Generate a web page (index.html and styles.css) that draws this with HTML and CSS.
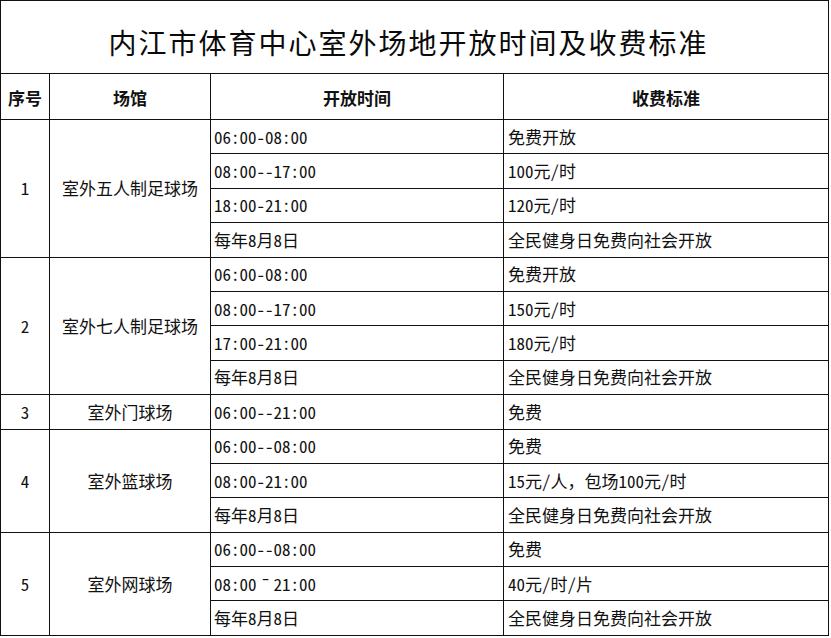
FILE: index.html
```html
<!DOCTYPE html>
<html lang="zh-CN">
<head>
<meta charset="utf-8">
<title>内江市体育中心室外场地开放时间及收费标准</title>
<link rel="stylesheet" href="styles.css">
</head>
<body>
<table class="sheet">
  <colgroup>
    <col class="c-no">
    <col class="c-venue">
    <col class="c-time">
    <col class="c-fee">
  </colgroup>
  <tr class="title-row"><td colspan="4" class="title">内江市体育中心室外场地开放时间及收费标准</td></tr>
  <tr class="head"><th>序号</th><th>场馆</th><th>开放时间</th><th>收费标准</th></tr>

  <tr><td rowspan="4" class="no">1</td><td rowspan="4" class="venue">室外五人制足球场</td><td class="time">06:00-08:00</td><td class="fee">免费开放</td></tr>
  <tr><td class="time">08:00--17:00</td><td class="fee">100元/时</td></tr>
  <tr><td class="time">18:00-21:00</td><td class="fee">120元/时</td></tr>
  <tr><td class="time">每年8月8日</td><td class="fee">全民健身日免费向社会开放</td></tr>

  <tr><td rowspan="4" class="no">2</td><td rowspan="4" class="venue">室外七人制足球场</td><td class="time">06:00-08:00</td><td class="fee">免费开放</td></tr>
  <tr><td class="time">08:00--17:00</td><td class="fee">150元/时</td></tr>
  <tr><td class="time">17:00-21:00</td><td class="fee">180元/时</td></tr>
  <tr><td class="time">每年8月8日</td><td class="fee">全民健身日免费向社会开放</td></tr>

  <tr><td class="no">3</td><td class="venue">室外门球场</td><td class="time">06:00--21:00</td><td class="fee">免费</td></tr>

  <tr><td rowspan="3" class="no">4</td><td rowspan="3" class="venue">室外篮球场</td><td class="time">06:00--08:00</td><td class="fee">免费</td></tr>
  <tr><td class="time">08:00-21:00</td><td class="fee">15元/人<span class="fw">，</span>包场100元/时</td></tr>
  <tr><td class="time">每年8月8日</td><td class="fee">全民健身日免费向社会开放</td></tr>

  <tr><td rowspan="3" class="no">5</td><td rowspan="3" class="venue">室外网球场</td><td class="time">06:00--08:00</td><td class="fee">免费</td></tr>
  <tr><td class="time">08:00<span class="fw dash">－</span>21:00</td><td class="fee">40元/时/片</td></tr>
  <tr><td class="time">每年8月8日</td><td class="fee">全民健身日免费向社会开放</td></tr>
</table>
</body>
</html>
```

FILE: styles.css
```css
html, body {
  margin: 0;
  padding: 0;
  background: #fff;
}

body {
  font-family: "Noto Sans CJK SC", "Noto Sans", sans-serif;
  color: #111;
}

.sheet {
  border-collapse: collapse;
  table-layout: fixed;
  width: 828px;
}

.c-no { width: 49px; }
.c-venue { width: 161px; }
.c-time { width: 293px; }
.c-fee { width: 325px; }

.sheet td,
.sheet th {
  border: 1px solid #111;
  padding: 0;
  font-size: 17px;
  line-height: 20px;
  font-weight: 400;
  font-feature-settings: "hwid" 1;
  white-space: nowrap;
  overflow: hidden;
}

.fw {
  font-feature-settings: normal;
  display: inline-block;
  width: 17px;
  text-align: center;
}

.dash {
  position: relative;
  top: -5px;
  transform: scaleX(0.45);
}

.sheet tr {
  height: 34.4px;
}

.sheet .title-row {
  height: 73px;
}

.title {
  font-size: 28px !important;
  line-height: 34px !important;
  letter-spacing: 2px;
  text-align: center;
  padding: 10px 12px 0 0 !important;
  color: #0a0a0a;
}

.sheet .head {
  height: 46px;
}

.head th {
  font-weight: 700;
  text-align: center;
  padding-top: 2px;
}

.no,
.venue {
  text-align: center;
}

.time {
  padding-left: 3px !important;
}

.fee {
  padding-left: 4px !important;
}
```
